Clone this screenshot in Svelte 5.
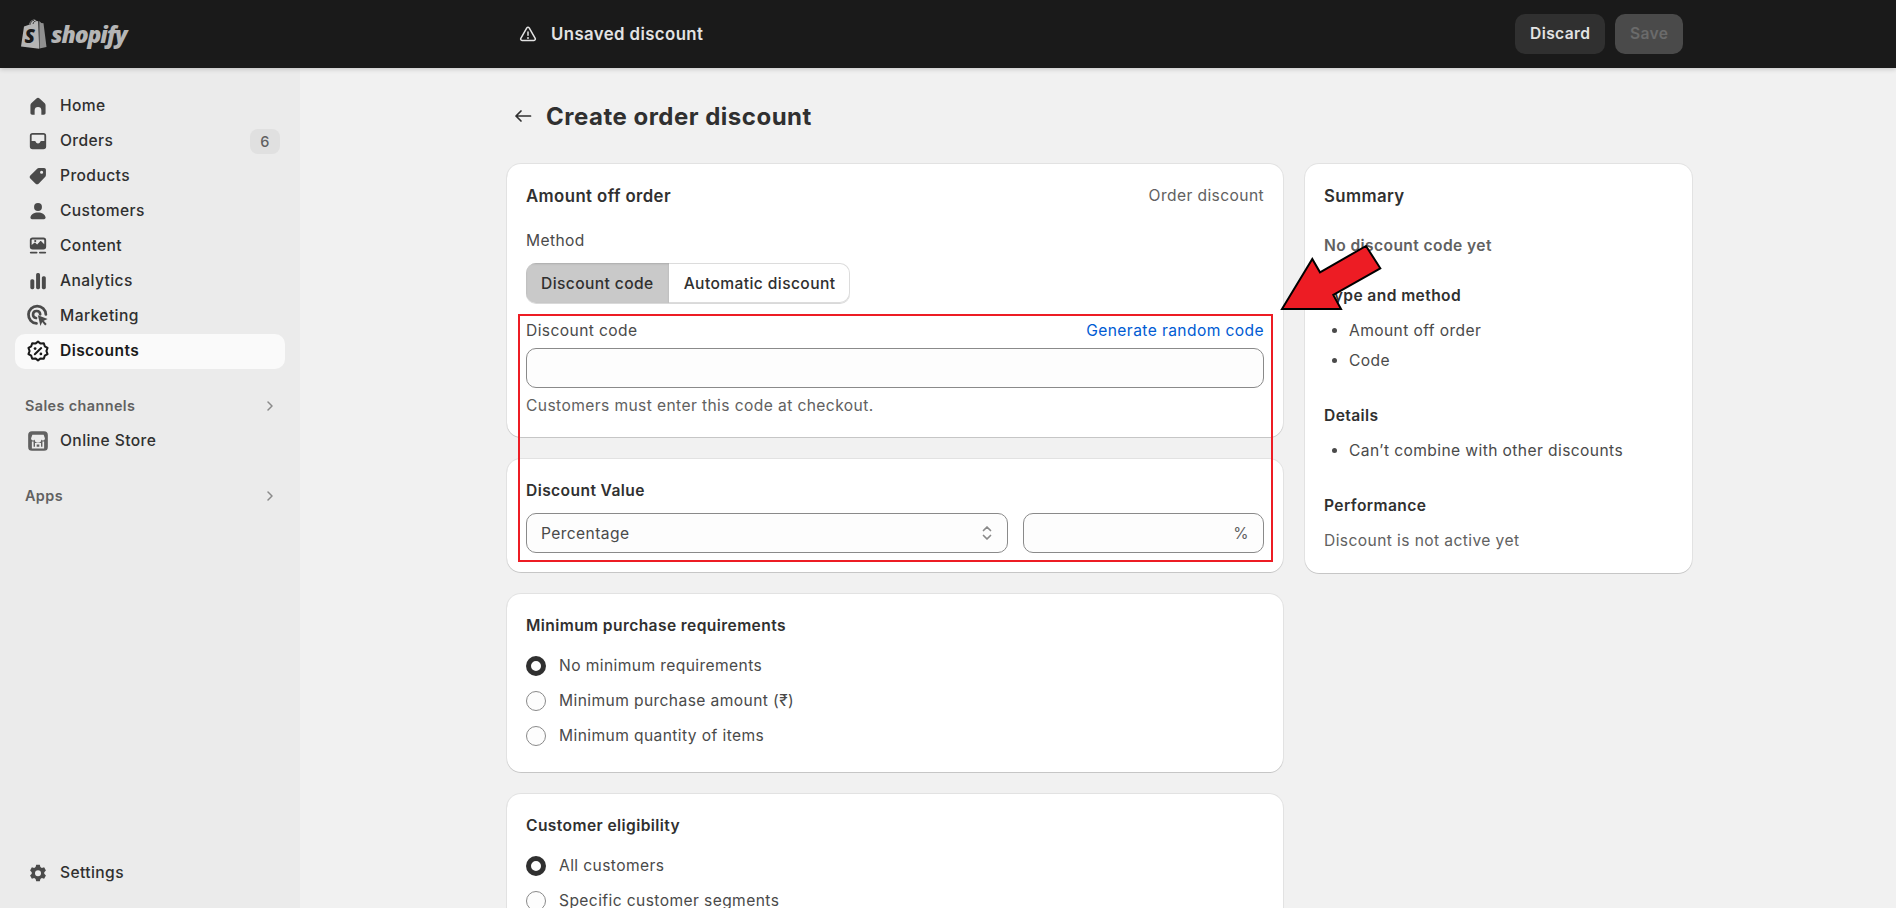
<script>
    const navItems = [
        {label: "Home", svg: `<path fill-rule="evenodd" d="M10 3.200c-.5 0-.9.2-1.300.5L4.600 7.400c-.6.500-.9 1.200-.9 2v6.500c0 .8.600 1.400 1.400 1.400h2.100v-3.600a2.800 2.800 0 0 1 5.600 0v3.600h2.100c.8 0 1.400-.6 1.400-1.400V9.400c0-.8-.3-1.500-.9-2l-4.100-3.700c-.4-.3-.8-.5-1.300-.5z"/>`},
        {label: "Orders", badge: 6, svg: `<path fill-rule="evenodd" d="M5.500 3.300h9A2.300 2.300 0 0 1 16.800 5.600v9a2.300 2.300 0 0 1-2.300 2.300h-9a2.300 2.300 0 0 1-2.300-2.300v-9a2.300 2.300 0 0 1 2.300-2.300zm0 1.500c-.4 0-.8.300-.8.800v4.500h2.500c.5 0 .9.300 1 .8.200.7.900 1.200 1.800 1.200s1.600-.5 1.800-1.200c.1-.5.500-.8 1-.8h2.500V5.600c0-.5-.4-.8-.8-.8z"/>`},
        {label: "Products", svg: `<path fill-rule="evenodd" d="M10.800 3.400h4.300c.8 0 1.500.7 1.500 1.500v4.300c0 .7-.3 1.300-.7 1.700l-5.400 5.500c-.7.700-1.800.7-2.500 0l-4.400-4.400c-.7-.7-.7-1.800 0-2.500l5.500-5.400c.4-.4 1-.7 1.700-.7zm2.200 2.200a1.300 1.300 0 1 0 0 2.600 1.300 1.300 0 0 0 0-2.600z"/>`},
        {label: "Customers", svg: `<circle cx="10" cy="6.600" r="3.300"/><path d="M10 11.300c-3.300 0-5.800 1.500-6.300 4-.2.900.5 1.600 1.300 1.600h10c.8 0 1.500-.7 1.300-1.600-.5-2.500-3-4-6.300-4z"/>`},
        {label: "Content", svg: `<path fill-rule="evenodd" d="M5.500 3h9a2.300 2.300 0 0 1 2.300 2.300v5.400a2.300 2.300 0 0 1-2.300 2.300h-9a2.300 2.300 0 0 1-2.300-2.300V5.300A2.300 2.300 0 0 1 5.500 3zm0 1.500c-.4 0-.8.300-.8.800v3.900l2-1.700c.4-.3.900-.3 1.200 0l1.400 1.200 2.300-2.500c.4-.4 1-.4 1.300 0l2.300 2.300V5.300c0-.5-.4-.8-.8-.8z"/><circle cx="7.700" cy="5.900" r=".9"/><rect x="3.200" y="14.700" width="6.400" height="1.600" rx=".8"/><rect x="10.800" y="14.700" width="6" height="1.600" rx=".8"/>`},
        {label: "Analytics", svg: `<rect x="3.600" y="8.500" width="3.300" height="8.300" rx="1.300"/><rect x="8.400" y="3.400" width="3.300" height="13.400" rx="1.300"/><rect x="13.200" y="6" width="3.300" height="10.800" rx="1.300"/>`},
        {label: "Marketing", svg: `<g transform="translate(10 10) scale(1.15) translate(-10.300 -10.300)"><path fill="none" stroke="#4a4a4a" stroke-width="2" stroke-linecap="round" d="M9.200 15.700a6.300 6.300 0 1 1 6.800-6.500"/><path fill="none" stroke="#4a4a4a" stroke-width="1.900" stroke-linecap="round" d="M8.900 11.800a2.600 2.600 0 1 1 3-2.700"/><path d="M10.200 9.800l7.100 2.700-2.900 1.200 2.200 2.400-1.100 1-2.200-2.400-1.200 2.800z"/></g>`},
        {label: "Discounts", active: true, svg: `<g transform="translate(10 10) scale(1.15) translate(-10 -9.700)"><path fill="none" stroke="#1a1a1a" stroke-width="1.500" stroke-linejoin="round" d="M10 2.900l1.900 1.400 2.300-.2.700 2.200 2 1.200-.8 2.200.8 2.200-2 1.200-.7 2.200-2.300-.2L10 16.500l-1.900-1.400-2.300.2-.7-2.200-2-1.200.8-2.200-.8-2.200 2-1.200.7-2.200 2.300.2z"/><path fill="none" stroke="#1a1a1a" stroke-width="1.500" stroke-linecap="round" d="M12.300 7.600l-4.600 4.400"/><circle cx="7.900" cy="7.900" r="1" fill="#1a1a1a"/><circle cx="12.100" cy="11.800" r="1" fill="#1a1a1a"/></g>`}
    ];

    const radioGroups = [
        {title: "Minimum purchase requirements", options: ["No minimum requirements", "Minimum purchase amount (₹)", "Minimum quantity of items"]},
        {title: "Customer eligibility", options: ["All customers", "Specific customer segments"]}
    ];

    const summaryType = ["Amount off order", "Code"];
</script>

<div class="page">
    <header class="topbar">
        <div class="logo">
            <svg width="27" height="31" viewBox="0 0 27 31">
                <path fill="#b5b5b5" d="M1 27.500L4 7.400 9 5.800C9.700 3 11.500.6 14 .5c1.500 0 2.300 1 2.800 1.800l1.400-.4 1 27.800z"/>
                <path fill="#8f8f8f" d="M19.300 2l2 2 2.200.2L26.500 28l-7 1.600z"/>
                <path fill="none" stroke="#1a1a1a" stroke-width=".8" d="M9.800 6c.6-2.500 2-4.700 4.200-4.700M13 5c.4-1.500 1.300-3 2.800-3"/>
                <text x="4.500" y="24" class="logoS">S</text>
            </svg>
            <span class="logoText">shopify</span>
        </div>
        <div class="pageStatus">
            <svg width="20" height="20" viewBox="0 0 20 20">
                <path fill="none" stroke="#e3e3e3" stroke-width="1.500" stroke-linejoin="round" d="M10 3.200c-.5 0-.9.300-1.200.7l-6 10.500c-.5.900.1 2 1.200 2h12c1.100 0 1.700-1.100 1.200-2l-6-10.500c-.3-.4-.7-.7-1.200-.7z"/>
                <rect x="9.250" y="7.200" width="1.500" height="4.800" rx=".7" fill="#e3e3e3"/>
                <circle cx="10" cy="14" r=".95" fill="#e3e3e3"/>
            </svg>
            <span>Unsaved discount</span>
        </div>
        <div class="actions">
            <button class="discard">Discard</button>
            <button class="save">Save</button>
        </div>
    </header>

    <div class="body">
        <aside class="sidebar">
            <nav class="navList">
                {#each navItems as item}
                    <div class="navItem" class:active={item.active}>
                        <svg class="navIcon" viewBox="0 0 20 20">{@html item.svg}</svg>
                        <span>{item.label}</span>
                        {#if item.badge}<span class="badge">{item.badge}</span>{/if}
                    </div>
                {/each}

                <div class="navSection">
                    <span>Sales channels</span>
                    <svg width="12" height="12" viewBox="0 0 12 12"><path class="chevron" d="M4 2l4 4-4 4"/></svg>
                </div>
                <div class="navItem">
                    <svg class="navIcon" viewBox="0 0 20 20">
                        <rect x="1.800" y="1.800" width="16.400" height="16.400" rx="3.200" fill="#616161"/>
                        <path fill="#ebebeb" d="M5.300 4.800h9.400l1.100 3.200a1.700 1.700 0 0 1-3.100.8 2 2 0 0 1-5.400 0 1.700 1.700 0 0 1-3.100-.8z"/>
                        <path fill="none" stroke="#ebebeb" stroke-width="1.400" d="M5.600 10.500v5h8.800v-5M8.200 15.500v-3.200h3.600v3.200"/>
                    </svg>
                    <span>Online Store</span>
                </div>
                <div class="navSection apps">
                    <span>Apps</span>
                    <svg width="12" height="12" viewBox="0 0 12 12"><path class="chevron" d="M4 2l4 4-4 4"/></svg>
                </div>
            </nav>
            <div class="navItem settings">
                <svg class="navIcon" viewBox="0 0 20 20">
                    <path fill="#4a4a4a" fill-rule="evenodd" d="M8.500 3.200h3l.5 1.900c.4.200.8.400 1.200.7l1.900-.5 1.500 2.600-1.400 1.400a5 5 0 0 1 0 1.400l1.400 1.400-1.500 2.600-1.900-.5c-.4.300-.8.500-1.200.7l-.5 1.900h-3l-.5-1.900c-.4-.2-.8-.4-1.200-.7l-1.900.5-1.500-2.600 1.400-1.400a5 5 0 0 1 0-1.400L3.400 7.900l1.500-2.600 1.900.5c.4-.3.800-.5 1.200-.7zM10 7.800a2.500 2.500 0 1 0 0 5 2.500 2.500 0 0 0 0-5z"/>
                </svg>
                <span>Settings</span>
            </div>
        </aside>

        <main class="main">
            <div class="content">
                <div class="titleRow">
                    <svg width="20" height="20" viewBox="0 0 20 20"><path fill="none" stroke="#303030" stroke-width="1.700" stroke-linecap="round" stroke-linejoin="round" d="M17.500 10H3m0 0l5-5m-5 5l5 5"/></svg>
                    <h1>Create order discount</h1>
                </div>

                <div class="columns">
                    <div class="leftColumn">
                        <section class="card">
                            <div class="cardHead">
                                <h2 class="bigTitle">Amount off order</h2>
                                <span class="muted">Order discount</span>
                            </div>
                            <p class="method">Method</p>
                            <div class="segmented">
                                <span class="segment selected">Discount code</span>
                                <span class="segment">Automatic discount</span>
                            </div>
                            <div class="labelRow">
                                <span>Discount code</span>
                                <span class="link">Generate random code</span>
                            </div>
                            <div class="field codeField"></div>
                            <p class="help">Customers must enter this code at checkout.</p>
                        </section>

                        <section class="card">
                            <h2>Discount Value</h2>
                            <div class="valueRow">
                                <div class="field selectField">
                                    <span>Percentage</span>
                                    <svg width="14" height="20" viewBox="0 0 14 20"><path fill="none" stroke="#8a8a8a" stroke-width="1.700" stroke-linecap="round" stroke-linejoin="round" d="M3.500 7.500L7 4l3.500 3.500M3.500 12.500L7 16l3.500-3.500"/></svg>
                                </div>
                                <div class="field percentField">%</div>
                            </div>
                        </section>

                        {#each radioGroups as group}
                            <section class="card radioCard">
                                <h2>{group.title}</h2>
                                <div class="radioList">
                                    {#each group.options as option, i}
                                        <div class="radioRow">
                                            <span class="radio" class:checked={i === 0}></span>
                                            <span>{option}</span>
                                        </div>
                                    {/each}
                                </div>
                            </section>
                        {/each}
                    </div>

                    <aside class="card summary">
                        <h2 class="bigTitle">Summary</h2>
                        <p class="noCode">No discount code yet</p>
                        <h3>Type and method</h3>
                        <ul>
                            {#each summaryType as line}<li>{line}</li>{/each}
                        </ul>
                        <h3>Details</h3>
                        <ul>
                            <li>Can’t combine with other discounts</li>
                        </ul>
                        <h3>Performance</h3>
                        <p class="notActive">Discount is not active yet</p>
                    </aside>
                </div>
            </div>
        </main>
    </div>

    <!-- annotation drawn over the screenshot -->
    <div class="redBox"></div>
    <svg class="arrow" width="110" height="75" viewBox="1275 240 110 75">
        <path fill="#ed1c24" stroke="#000" stroke-width="2" d="M1282 309L1312.300 259 1320 272.300 1366 246 1380.300 268.300 1333.300 295 1341 309z"/>
    </svg>
</div>

<style>
    :global(body){
        margin: 0;
    }

    .page{
        position: relative;
        height: 908px;
        overflow: hidden;
        background: #f1f1f1;
        color: #303030;
        font-family: Inter, "Liberation Sans", sans-serif;
        font-size: 15.6px;
        letter-spacing: 0.4px;
        line-height: 24px;
    }

    .topbar{
        position: relative;
        z-index: 1;
        display: flex;
        align-items: center;
        height: 68px;
        background: #1a1a1a;
        box-shadow: 0 1px 5px rgba(0, 0, 0, 0.2);
    }

    .logo{
        display: flex;
        align-items: center;
        gap: 4px;
        width: 500px;
        padding-left: 20px;
        box-sizing: border-box;
    }

    .logoS{
        font-family: "Open Sans", sans-serif;
        font-weight: 800;
        font-style: italic;
        font-size: 19px;
        fill: #1a1a1a;
    }

    .logoText{
        font-family: "Open Sans", sans-serif;
        font-weight: 800;
        font-style: italic;
        font-size: 23px;
        letter-spacing: -1.1px;
        color: #b5b5b5;
    }

    .pageStatus{
        display: flex;
        align-items: center;
        gap: 13px;
        padding-left: 18px;
        color: #e3e3e3;
        font-size: 16.8px;
        font-weight: 600;
    }

    .actions{
        display: flex;
        gap: 10px;
        margin-left: auto;
        padding-right: 213px;
    }

    button{
        height: 40px;
        padding: 0 15px;
        border: none;
        border-radius: 10px;
        font: inherit;
        font-weight: 600;
        letter-spacing: inherit;
    }

    .discard{
        background: #303030;
        color: #e3e3e3;
    }

    .save{
        padding: 0 14.5px;
        background: #4a4a4a;
        color: #6b6b6b;
    }

    .body{
        display: flex;
        height: 840px;
    }

    .sidebar{
        display: flex;
        flex-direction: column;
        justify-content: space-between;
        width: 300px;
        padding: 20.5px 15px 18px;
        box-sizing: border-box;
        background: #ebebeb;
        flex-shrink: 0;
    }

    .navItem{
        display: flex;
        align-items: center;
        gap: 10px;
        height: 35px;
        padding: 0 5px 0 11px;
        border-radius: 10px;
        font-weight: 500;
    }

    .navItem.active{
        background: #fafafa;
        font-weight: 600;
        color: #1a1a1a;
    }

    .navIcon{
        width: 24px;
        height: 24px;
        fill: #4a4a4a;
        flex-shrink: 0;
    }

    .badge{
        margin-left: auto;
        width: 30px;
        height: 25px;
        border-radius: 8px;
        background: #e0e0e0;
        color: #616161;
        font-size: 14.5px;
        line-height: 25px;
        text-align: center;
    }

    .navSection{
        display: flex;
        align-items: center;
        justify-content: space-between;
        height: 35px;
        margin-top: 19.5px;
        padding: 0 9px 0 10px;
        color: #616161;
        font-size: 14.4px;
        font-weight: 600;
    }

    .navSection.apps{
        margin-top: 20px;
    }

    .chevron{
        fill: none;
        stroke: #8a8a8a;
        stroke-width: 1.500;
        stroke-linecap: round;
        stroke-linejoin: round;
    }

    .main{
        flex-grow: 1;
        display: flex;
        justify-content: center;
        padding-left: 3px;
    }

    .content{
        width: 1185px;
    }

    .titleRow{
        display: flex;
        align-items: center;
        gap: 13px;
        height: 36px;
        margin: 30px 0;
        padding-left: 6px;
    }

    h1{
        margin: 0;
        padding-top: 2px;
        font-size: 24px;
        font-weight: 700;
        letter-spacing: 0.5px;
    }

    .columns{
        display: flex;
        align-items: flex-start;
        gap: 22px;
    }

    .leftColumn{
        display: flex;
        flex-direction: column;
        gap: 22px;
        width: 776px;
        flex-shrink: 0;
    }

    .card{
        padding: 20px 19px 19px;
        box-sizing: border-box;
        background: #fff;
        border-radius: 14px;
        box-shadow: 0 1px 0 rgba(0, 0, 0, 0.12), 0 0 0 1px rgba(0, 0, 0, 0.06);
    }

    .radioCard{
        padding-bottom: 18px;
    }

    h2{
        margin: 0;
        font-size: 15.6px;
        font-weight: 600;
        line-height: 24px;
    }

    .bigTitle{
        font-size: 16.8px;
    }

    .cardHead{
        display: flex;
        justify-content: space-between;
    }

    .muted{
        color: #616161;
    }

    .method{
        margin: 21px 0 0;
        color: #4a4a4a;
    }

    .segmented{
        display: inline-flex;
        height: 40px;
        margin-top: 10px;
        border-radius: 10px;
        overflow: hidden;
        box-shadow: inset 0 0 0 1px #dcdcdc, 0 1px 0 rgba(0, 0, 0, 0.15);
    }

    .segment{
        display: flex;
        align-items: center;
        padding: 2px 15px 0;
        font-weight: 500;
    }

    .segment.selected{
        background: #c9c9c9;
        color: #303030;
        box-shadow: inset 0 1px 2px rgba(0, 0, 0, 0.15);
    }

    .labelRow{
        display: flex;
        justify-content: space-between;
        margin-top: 16px;
        color: #4a4a4a;
    }

    .link{
        color: #005bd3;
    }

    .field{
        display: flex;
        align-items: center;
        height: 40px;
        box-sizing: border-box;
        background: #fdfdfd;
        border: 1px solid #8a8a8a;
        border-radius: 10px;
    }

    .codeField{
        margin-top: 5px;
    }

    .help{
        margin: 6px 0 0;
        color: #616161;
    }

    .valueRow{
        display: flex;
        gap: 15px;
        margin-top: 10px;
    }

    .selectField{
        justify-content: space-between;
        flex-grow: 1;
        padding: 2px 13px 0 14px;
        color: #4a4a4a;
    }

    .selectField svg{
        margin-top: -2px;
    }

    .percentField{
        justify-content: flex-end;
        width: 241px;
        padding: 2px 14px 0 0;
        color: #616161;
        flex-shrink: 0;
    }

    .radioList{
        margin-top: 10.5px;
    }

    .radioRow{
        display: flex;
        align-items: center;
        gap: 13px;
        height: 35px;
        color: #4a4a4a;
    }

    .radio{
        width: 20px;
        height: 20px;
        box-sizing: border-box;
        border: 1px solid #8a8a8a;
        border-radius: 50%;
        background: #fdfdfd;
        flex-shrink: 0;
    }

    .radio.checked{
        border: 5.5px solid #303030;
        background: #fff;
    }

    .summary{
        width: 387px;
        height: 409px;
        flex-shrink: 0;
    }

    .noCode{
        margin: 26px 0 0;
        color: #616161;
        font-weight: 600;
    }

    h3{
        margin: 26px 0 0;
        font-size: 15.6px;
        font-weight: 600;
    }

    ul{
        margin: 11px 0 0;
        padding-left: 25px;
        color: #4a4a4a;
    }

    li{
        height: 30px;
    }

    ul + h3{
        margin-top: 25px;
    }

    .notActive{
        margin: 11px 0 0;
        color: #616161;
    }

    .redBox{
        position: absolute;
        left: 518px;
        top: 314px;
        width: 754.5px;
        height: 247.5px;
        box-sizing: border-box;
        border: 2px solid #ed1c24;
    }

    .arrow{
        position: absolute;
        left: 1275px;
        top: 240px;
    }
</style>
